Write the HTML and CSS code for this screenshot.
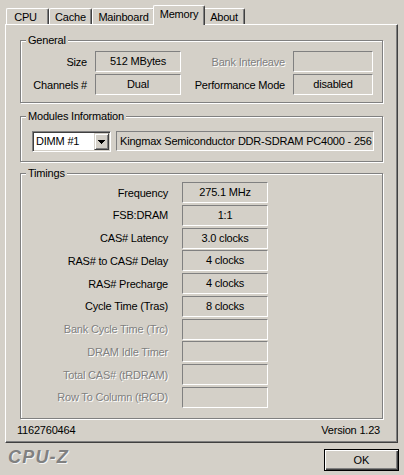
FILE: index.html
```html
<!DOCTYPE html>
<html lang="en">
<head>
    <meta charset="UTF-8">
    <title>CPU-Z - Memory</title>
    <link rel="stylesheet" href="styles.css">
</head>
<body>
    <div class="window">
        <div class="tabs">
            <div class="tab tab-cpu">CPU</div>
            <div class="tab tab-cache">Cache</div>
            <div class="tab tab-mainboard">Mainboard</div>
            <div class="tab tab-memory tab-active">Memory</div>
            <div class="tab tab-about">About</div>
        </div>

        <div class="panel">
            <fieldset class="group group-general">
                <legend>General</legend>
                <div class="general-grid">
                    <span class="label">Size</span>
                    <span class="value">512 MBytes</span>
                    <span class="label disabled">Bank Interleave</span>
                    <span class="value"></span>
                    <span class="label">Channels #</span>
                    <span class="value">Dual</span>
                    <span class="label">Performance Mode</span>
                    <span class="value">disabled</span>
                </div>
            </fieldset>

            <fieldset class="group group-modules">
                <legend>Modules Information</legend>
                <div class="modules-row">
                    <div class="combo">
                        <span class="combo-text">DIMM #1</span>
                        <span class="combo-btn">
                            <svg width="7" height="4" viewBox="0 0 7 4">
                                <path d="M0 0h7v1H0zM1 1h5v1H1zM2 2h3v1H2zM3 3h1v1H3z" fill="#000"/>
                            </svg>
                        </span>
                    </div>
                    <div class="module-name">Kingmax Semiconductor DDR-SDRAM PC4000 - 256</div>
                </div>
            </fieldset>

            <fieldset class="group group-timings">
                <legend>Timings</legend>
                <div class="timings-grid">
                    <span class="label">Frequency</span>
                    <span class="value">275.1 MHz</span>
                    <span class="label">FSB:DRAM</span>
                    <span class="value">1:1</span>
                    <span class="label">CAS# Latency</span>
                    <span class="value">3.0 clocks</span>
                    <span class="label">RAS# to CAS# Delay</span>
                    <span class="value">4 clocks</span>
                    <span class="label">RAS# Precharge</span>
                    <span class="value">4 clocks</span>
                    <span class="label">Cycle Time (Tras)</span>
                    <span class="value">8 clocks</span>
                    <span class="label disabled">Bank Cycle Time (Trc)</span>
                    <span class="value"></span>
                    <span class="label disabled">DRAM Idle Timer</span>
                    <span class="value"></span>
                    <span class="label disabled">Total CAS# (tRDRAM)</span>
                    <span class="value"></span>
                    <span class="label disabled">Row To Column (tRCD)</span>
                    <span class="value"></span>
                </div>
            </fieldset>

            <div class="status">
                <span>1162760464</span>
                <span>Version 1.23</span>
            </div>
        </div>

        <div class="footer">
            <span class="logo">CPU-Z</span>
            <button class="ok-button">OK</button>
        </div>
    </div>
</body>
</html>
```

FILE: styles.css
```css
body {
    margin: 0;
    background: #d4d0c8;
    font-family: "Liberation Sans", Arial, sans-serif;
    font-size: 11px;
    letter-spacing: -0.2px;
    color: #000;
}
.window {
    width: 404px;
    height: 475px;
}

/* tab strip */
.tabs {
    display: flex;
    align-items: flex-end;
    height: 24px;
    padding-left: 6px;
}
.tab {
    box-sizing: border-box;
    height: 16px;
    padding-top: 2px;
    line-height: 13px;
    text-align: center;
    border: 1px solid #fff;
    border-right-color: #404040;
    border-bottom: 0;
    border-radius: 2px 2px 0 0;
    box-shadow: inset -1px 0 #808080;
}
.tab-cpu { width: 43px; padding-right: 4px; }
.tab-cache { width: 43px; }
.tab-mainboard { width: 63px; }
.tab-memory { width: 52px; }
.tab-about { width: 42px; }
.tab-active {
    position: relative;
    z-index: 1;
    height: 20px;
    margin: 0 -2px -1px;
    background: #d4d0c8;
}

/* page panel */
.panel {
    box-sizing: border-box;
    width: 393px;
    margin-left: 5px;
    padding: 0 14px 5px;
    border: 1px solid #fff;
    border-right-color: #404040;
    border-bottom-color: #404040;
    box-shadow: inset -1px -1px #808080;
}

/* etched group boxes */
.group {
    margin: 0;
    padding: 0;
    min-width: 0;
    border: 1px solid #808080;
    box-shadow: inset 1px 1px #fff, 1px 1px #fff;
}
.group legend {
    margin-left: 5px;
    padding: 0 2px;
    line-height: 13px;
    background: #d4d0c8;
}
.group-general { margin-top: 9px; }
.group-modules { margin-top: 7px; }
.group-timings { margin-top: 5px; }

.label {
    text-align: right;
    white-space: nowrap;
}
.label.disabled {
    color: #808080;
    text-shadow: 1px 1px 0 #fff;
}
.value {
    box-sizing: border-box;
    height: 21px;
    line-height: 19px;
    text-align: center;
    border: 1px solid;
    border-color: #808080 #fff #fff #808080;
}

.general-grid {
    display: grid;
    grid-template-columns: 66px 86px 96px 80px;
    grid-auto-rows: 21px;
    column-gap: 8px;
    row-gap: 2px;
    align-items: center;
    padding: 4px 0 7px;
}

/* modules row */
.modules-row {
    display: flex;
    gap: 5px;
    padding: 8px 0 9px 11px;
}
.combo {
    box-sizing: border-box;
    display: flex;
    width: 79px;
    height: 21px;
    padding: 1px;
    border: 1px solid;
    border-color: #808080 #fff #fff #808080;
    box-shadow: inset 1px 1px #404040, inset -1px -1px #d4d0c8;
    background: #fff;
}
.combo-text {
    flex: 1;
    padding-left: 2px;
    line-height: 17px;
}
.combo-btn {
    box-sizing: border-box;
    display: flex;
    align-items: center;
    justify-content: center;
    width: 15px;
    height: 17px;
    background: #d4d0c8;
    border: 1px solid;
    border-color: #d4d0c8 #404040 #404040 #d4d0c8;
    box-shadow: inset 1px 1px #fff, inset -1px -1px #808080;
}
.module-name {
    box-sizing: border-box;
    width: 258px;
    height: 20px;
    padding-left: 3px;
    line-height: 18px;
    white-space: nowrap;
    overflow: hidden;
    border: 1px solid;
    border-color: #808080 #fff #fff #808080;
}

/* timings */
.timings-grid {
    display: grid;
    grid-template-columns: 147px 86px;
    grid-auto-rows: 21px;
    column-gap: 14px;
    row-gap: 1.75px;
    align-items: center;
    padding: 2px 0 10px;
}

.status {
    display: flex;
    justify-content: space-between;
    margin: 5px 3px 0 -3px;
    line-height: 13px;
}

/* bottom bar */
.footer {
    display: flex;
    justify-content: space-between;
    align-items: flex-start;
    padding: 6px 5px 0 8px;
}
.logo {
    font-size: 18px;
    font-weight: bold;
    font-style: italic;
    line-height: 17px;
    letter-spacing: 1.2px;
    color: #808080;
    text-shadow: 1px 1px 0 #f4f4f4;
}
.ok-button {
    box-sizing: border-box;
    width: 75px;
    height: 22px;
    padding: 0;
    font: inherit;
    line-height: 18px;
    color: #000;
    background: #d4d0c8;
    border: 1px solid #000;
    box-shadow: inset 1px 1px #fff, inset -1px -1px #404040, inset -2px -2px #808080;
}
```
